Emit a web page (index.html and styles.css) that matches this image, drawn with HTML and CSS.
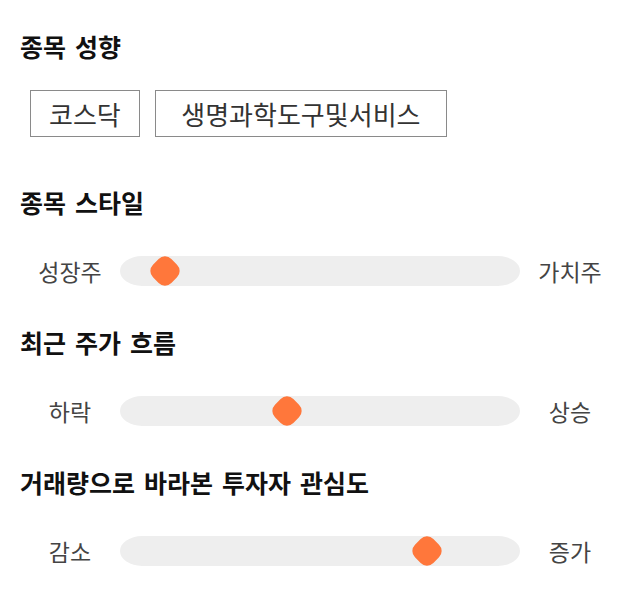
FILE: index.html
```html
<!DOCTYPE html>
<html lang="ko">
<head>
<meta charset="utf-8">
<link rel="stylesheet" href="styles.css">
</head>
<body>
<div class="page">
  <h2 class="title first">종목 성향</h2>
  <div class="tags">
    <span class="tag">코스닥</span>
    <span class="tag tag-wide">생명과학도구및서비스</span>
  </div>

  <h2 class="title">종목 스타일</h2>
  <div class="slider-row">
    <span class="label">성장주</span>
    <div class="track"><span class="thumb" style="left: 11.25%"></span></div>
    <span class="label">가치주</span>
  </div>

  <h2 class="title">최근 주가 흐름</h2>
  <div class="slider-row">
    <span class="label">하락</span>
    <div class="track"><span class="thumb" style="left: 41.75%"></span></div>
    <span class="label">상승</span>
  </div>

  <h2 class="title">거래량으로 바라본 투자자 관심도</h2>
  <div class="slider-row">
    <span class="label">감소</span>
    <div class="track"><span class="thumb" style="left: 76.75%"></span></div>
    <span class="label">증가</span>
  </div>
</div>
</body>
</html>
```

FILE: styles.css
```css
html, body {
  margin: 0;
  padding: 0;
  background: #ffffff;
}

.page {
  padding: 0 20px;
  font-family: "Noto Sans CJK KR", "Noto Sans", sans-serif;
  color: #111;
}

.title {
  margin: 41px 0 0 0;
  font-size: 25px;
  font-weight: 700;
  line-height: 30px;
  height: 30px;
  color: #111;
  word-spacing: 2px;
}

.title.first {
  margin-top: 31px;
}

.tags {
  display: flex;
  gap: 15px;
  margin-top: 29px;
  margin-left: 10px;
  margin-bottom: 50px;
}

.tag {
  display: block;
  border: 1px solid #8a8a8a;
  height: 45px;
  line-height: 45px;
  padding: 0 18px;
  font-size: 26px;
  color: #333;
}

.tag-wide {
  padding: 0 25.5px;
}

.slider-row {
  display: grid;
  grid-template-columns: 100px 400px 100px;
  align-items: center;
  height: 30px;
  margin-top: 39px;
}

.label {
  text-align: center;
  font-size: 23px;
  color: #444;
  line-height: 30px;
}

.track {
  position: relative;
  height: 30px;
  background: #eeeeee;
  border-radius: 22px / 15px;
}

.thumb {
  position: absolute;
  top: 50%;
  width: 26px;
  height: 26px;
  margin-left: -13px;
  margin-top: -13px;
  background: #ff773b;
  border-radius: 9px;
  transform: rotate(45deg);
}
```
